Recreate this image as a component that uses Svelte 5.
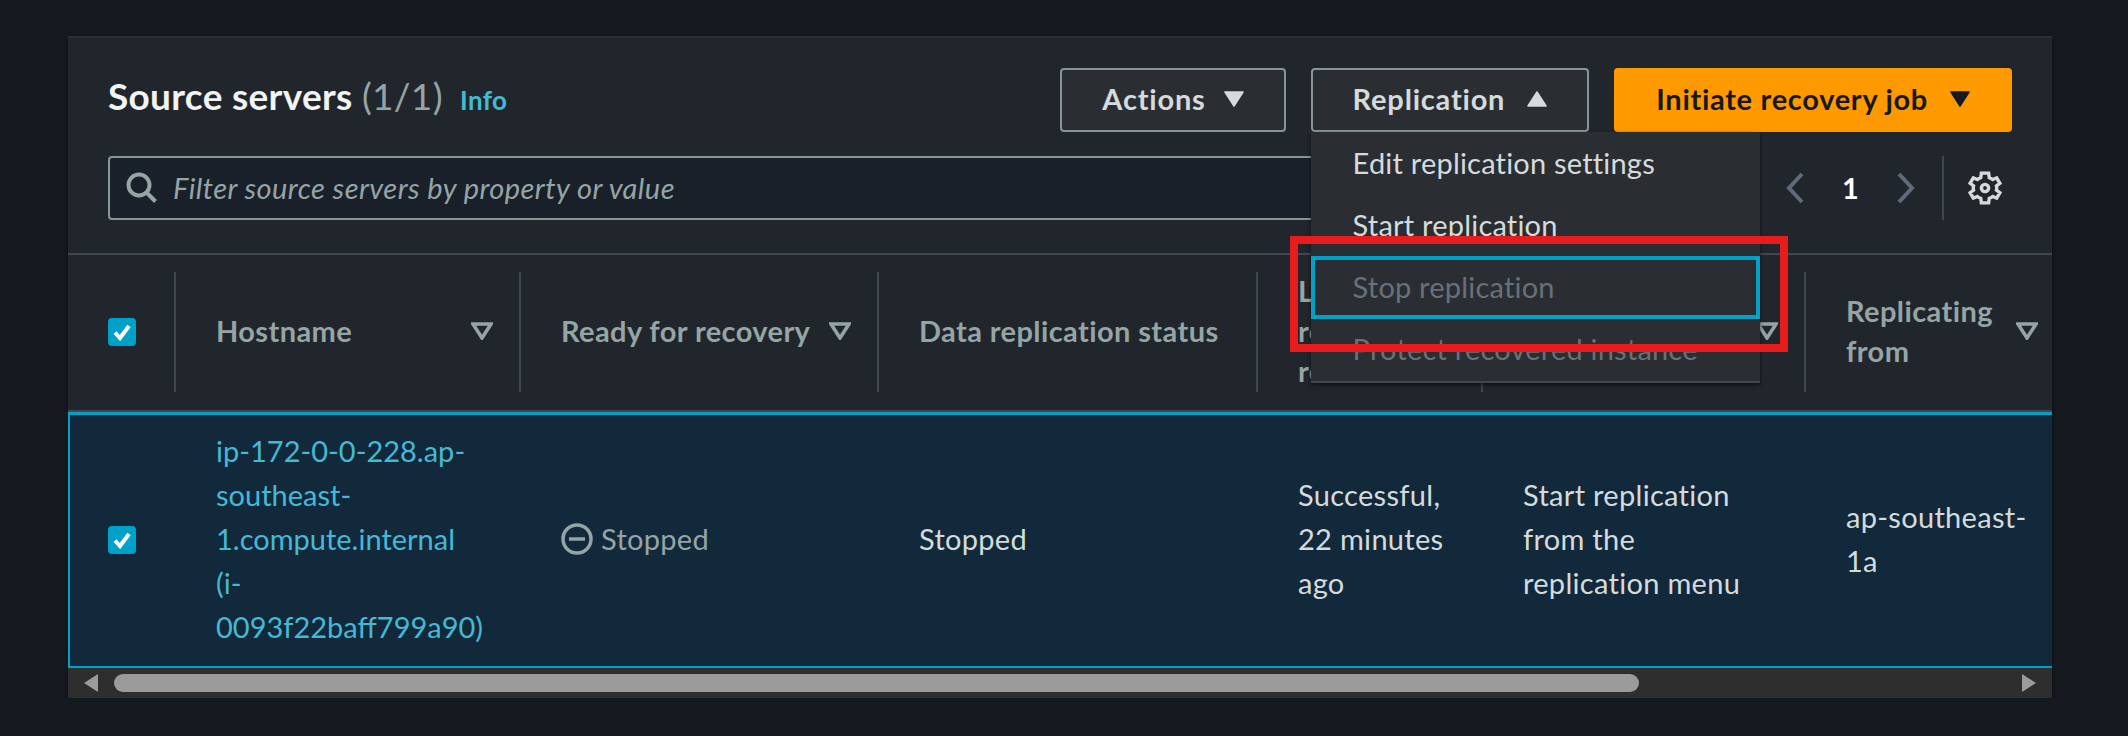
<script lang="ts">
	const menuItems = [
		{ label: 'Edit replication settings', disabled: false, focused: false },
		{ label: 'Start replication', disabled: false, focused: false },
		{ label: 'Stop replication', disabled: true, focused: true },
		{ label: 'Protect recovered instance', disabled: true, focused: false }
	];

	const columns = [
		{ label: 'Hostname', sort: true },
		{ label: 'Ready for recovery', sort: true },
		{ label: 'Data replication status', sort: false },
		{ label: 'Last recovery result', sort: false },
		{ label: 'Next step', sort: true },
		{ label: 'Replicating from', sort: true }
	];
</script>

{#snippet caret(up: boolean)}
	<svg class="caret" class:up viewBox="0 0 20 16" aria-hidden="true">
		<path d="M1 1h18L10 15z" fill="currentColor" stroke="currentColor" stroke-width="1.5" stroke-linejoin="round" />
	</svg>
{/snippet}

{#snippet checkbox()}
	<span class="checkbox">
		<svg viewBox="0 0 28 28" aria-hidden="true">
			<path d="M7 14.5l5 5.5 9-12" fill="none" stroke="#fff" stroke-width="4" />
		</svg>
	</span>
{/snippet}

<main class="panel">
	<header class="title-row">
		<h2>Source servers <span class="count">(1/1)</span> <a href="#info" class="info">Info</a></h2>
		<div class="actions">
			<button class="btn compact">Actions {@render caret(false)}</button>
			<div class="dropdown">
				<button class="btn">Replication {@render caret(true)}</button>
				<ul class="menu">
					{#each menuItems as item}
						<li class:disabled={item.disabled} class:focused={item.focused}>{item.label}</li>
					{/each}
				</ul>
				<div class="annotation"></div>
			</div>
			<button class="btn primary">Initiate recovery job {@render caret(false)}</button>
		</div>
	</header>

	<div class="filter-row">
		<div class="filter">
			<svg viewBox="0 0 32 32" class="search" aria-hidden="true">
				<circle cx="13" cy="13" r="10.5" fill="none" stroke="currentColor" stroke-width="4" />
				<path d="M20.5 20.5l9 9" stroke="currentColor" stroke-width="4" />
			</svg>
			<span>Filter source servers by property or value</span>
		</div>
		<nav class="pager">
			<svg viewBox="0 0 18 32" class="chev" aria-hidden="true"><path d="M16 2L3 16l13 14" /></svg>
			<b>1</b>
			<svg viewBox="0 0 18 32" class="chev" aria-hidden="true"><path d="M2 2l13 14L2 30" /></svg>
		</nav>
		<div class="prefs">
			<svg viewBox="0 0 16 16" class="gear" aria-hidden="true">
				<path d="M13.5 8c0-.3 0-.7-.1-1l1.6-1.2-1.5-2.6-1.9.8c-.5-.4-1-.7-1.6-.9L9.7 1H6.3L6 3.1c-.6.2-1.1.5-1.6.9l-1.9-.8L1 5.8 2.6 7c-.1.3-.1.7-.1 1s0 .7.1 1L1 10.2l1.5 2.6 1.9-.8c.5.4 1 .7 1.6.9l.3 2.1h3.4l.3-2.1c.6-.2 1.1-.5 1.6-.9l1.9.8 1.5-2.6L13.4 9c.1-.3.1-.7.1-1z" />
				<circle cx="8" cy="8" r="1.7" />
			</svg>
		</div>
	</div>

	<div class="table">
		<div class="grid head">
			<div class="cell check">{@render checkbox()}</div>
			{#each columns as col}
				<div class="cell">
					<span class="col-label">{col.label}</span>
					{#if col.sort}
						<svg viewBox="0 0 22 18" class="sort" aria-hidden="true"><path d="M2 2h18L11 16z" /></svg>
					{/if}
				</div>
			{/each}
		</div>
		<div class="grid row">
			<div class="cell check">{@render checkbox()}</div>
			<div class="cell"><a href="#host" class="link">ip-172-0-0-228.ap-southeast-1.compute.internal (i-0093f22baff799a90)</a></div>
			<div class="cell status">
				<svg viewBox="0 0 32 32" aria-hidden="true">
					<circle cx="16" cy="16" r="14" />
					<path d="M8 16h16" />
				</svg>
				Stopped
			</div>
			<div class="cell">Stopped</div>
			<div class="cell">Successful, 22 minutes ago</div>
			<div class="cell">Start replication from the replication menu</div>
			<div class="cell">ap-southeast-1a</div>
		</div>
	</div>

	<div class="scrollbar">
		<svg viewBox="0 0 14 18" class="arrow" aria-hidden="true"><path d="M14 0v18L0 9z" /></svg>
		<div class="track"><div class="thumb"></div></div>
		<svg viewBox="0 0 14 18" class="arrow" aria-hidden="true"><path d="M0 0v18l14-9z" /></svg>
	</div>
</main>

<style>
	:global(body) {
		background: #16191f;
		font-family: Lato, 'Open Sans', sans-serif;
		font-size: 29px;
		letter-spacing: 0.3px;
		line-height: 44px;
		color: #d5dbdb;
	}

	.panel {
		width: 1984px;
		margin: 36px 0 0 68px;
		background: #21262c;
		border-top: 2px solid #2a2f35;
		box-sizing: border-box;
		box-shadow: 0 2px 4px rgba(0, 0, 0, 0.5);
	}

	.title-row {
		display: flex;
		justify-content: space-between;
		align-items: center;
		padding: 30px 40px 0;
		position: relative;
		z-index: 2;
	}

	h2 {
		margin: 0 0 4px;
		font-size: 37px;
		line-height: 44px;
		font-weight: 700;
		color: #f2f3f3;
	}

	.count {
		font-weight: 400;
		color: #95a5a6;
	}

	.info {
		margin-left: 8px;
		font-size: 26px;
		font-weight: 700;
		color: #44b9d6;
		text-decoration: none;
	}

	.actions {
		display: flex;
		gap: 25px;
	}

	.dropdown {
		position: relative;
	}

	.btn {
		display: flex;
		align-items: center;
		gap: 22px;
		height: 64px;
		padding: 0 40px 2px;
		box-sizing: border-box;
		border: 2px solid #879596;
		border-radius: 4px;
		background: #2a2e33;
		color: #d5dbdb;
		font: 700 29px/44px Lato, 'Open Sans', sans-serif;
		letter-spacing: 0.8px;
	}

	.compact {
		gap: 18px;
	}

	.primary {
		background: #ff9900;
		border-color: #ff9900;
		color: #16191f;
		letter-spacing: 0.7px;
	}

	.caret {
		width: 20px;
		height: 16px;
	}

	.caret.up {
		transform: rotate(180deg);
	}

	.menu {
		position: absolute;
		top: 100%;
		left: 0;
		width: 449px;
		margin: 0;
		padding: 1px 0 0;
		list-style: none;
		background: #2a2e33;
		border-bottom: 2px solid #414750;
		box-shadow: 0 2px 4px rgba(0, 0, 0, 0.6);
		letter-spacing: 0.2px;
	}

	.menu li {
		height: 62px;
		padding-left: 42px;
		line-height: 60px;
		box-sizing: border-box;
		white-space: nowrap;
		color: #d5dbdb;
	}

	.menu li.disabled {
		color: #687078;
	}

	.menu li.focused {
		height: 63px;
		margin-top: -1px;
		padding-left: 38px;
		line-height: 53px;
		border: 4px solid #00a1c9;
	}

	.annotation {
		position: absolute;
		left: -21px;
		top: 168px;
		width: 498px;
		height: 116px;
		box-sizing: border-box;
		border: 8px solid #e81c1c;
		pointer-events: none;
	}

	.filter-row {
		display: flex;
		align-items: center;
		height: 64px;
		margin-top: 24px;
		padding-left: 40px;
	}

	.filter {
		flex: 0 0 1640px;
		display: flex;
		align-items: center;
		gap: 15px;
		height: 64px;
		box-sizing: border-box;
		padding-left: 16px;
		background: #1a2029;
		border: 2px solid #879596;
		border-radius: 4px;
		color: #95a5a6;
		font-style: italic;
		letter-spacing: 0.45px;
	}

	.search {
		width: 32px;
		height: 32px;
	}

	.pager {
		display: flex;
		align-items: center;
		width: 129px;
		justify-content: space-between;
		margin-left: 38px;
		color: #fff;
	}

	.pager b {
		font-weight: 700;
	}

	.chev {
		width: 18px;
		height: 32px;
		fill: none;
		stroke: #5f6b7a;
		stroke-width: 4;
	}

	.prefs {
		display: flex;
		align-items: center;
		height: 64px;
		margin-left: 27px;
		padding-left: 24px;
		border-left: 2px solid #414750;
	}

	.gear {
		width: 34px;
		height: 34px;
		fill: none;
		stroke: #d5dbdb;
		stroke-width: 1.6;
	}

	.table {
		margin-top: 33px;
		border-top: 2px solid #414750;
		overflow: hidden;
	}

	.grid {
		display: grid;
		grid-template-columns: 108px 345px 358px 379px 225px 323px 260px;
		width: 2198px;
	}

	.head {
		padding: 17px 0 18px;
		border-bottom: 2px solid #414750;
		line-height: 40px;
		color: #95a5a6;
		font-weight: 700;
		letter-spacing: 0.4px;
	}

	.cell {
		display: flex;
		align-items: center;
		padding: 0 36px 3px 40px;
		box-sizing: border-box;
	}

	.head .cell {
		height: 120px;
		justify-content: space-between;
		gap: 16px;
		padding: 0 26px 2px 40px;
		border-right: 2px solid #414750;
	}

	.head .check {
		padding: 0 0 0 40px;
	}

	.row .check {
		padding: 0 0 2px 40px;
	}

	.checkbox {
		display: block;
		width: 28px;
		height: 28px;
		border-radius: 4px;
		background: #00a1c9;
	}

	.checkbox svg {
		display: block;
	}

	.sort {
		flex: none;
		width: 22px;
		height: 18px;
		fill: none;
		stroke: #95a5a6;
		stroke-width: 3.5;
	}

	.row {
		height: 256px;
		box-sizing: border-box;
		background: #12293b;
		border-top: 3px solid #00a1c9;
		border-bottom: 2px solid #00a1c9;
		box-shadow: inset 2px 0 0 #00a1c9;
	}

	.link {
		color: #44b9d6;
		letter-spacing: 0;
		text-decoration: none;
	}

	.status {
		gap: 8px;
		color: #95a5a6;
	}

	.status svg {
		flex: none;
		width: 32px;
		height: 32px;
		fill: none;
		stroke: #95a5a6;
		stroke-width: 3.5;
	}

	.scrollbar {
		display: flex;
		align-items: center;
		gap: 16px;
		height: 30px;
		padding: 0 16px;
		background: #2e2e2e;
	}

	.arrow {
		flex: none;
		width: 14px;
		height: 18px;
		fill: #9b9b9b;
	}

	.track {
		flex: 1;
	}

	.thumb {
		width: 1525px;
		height: 18px;
		border-radius: 9px;
		background: #9b9b9b;
	}
</style>
